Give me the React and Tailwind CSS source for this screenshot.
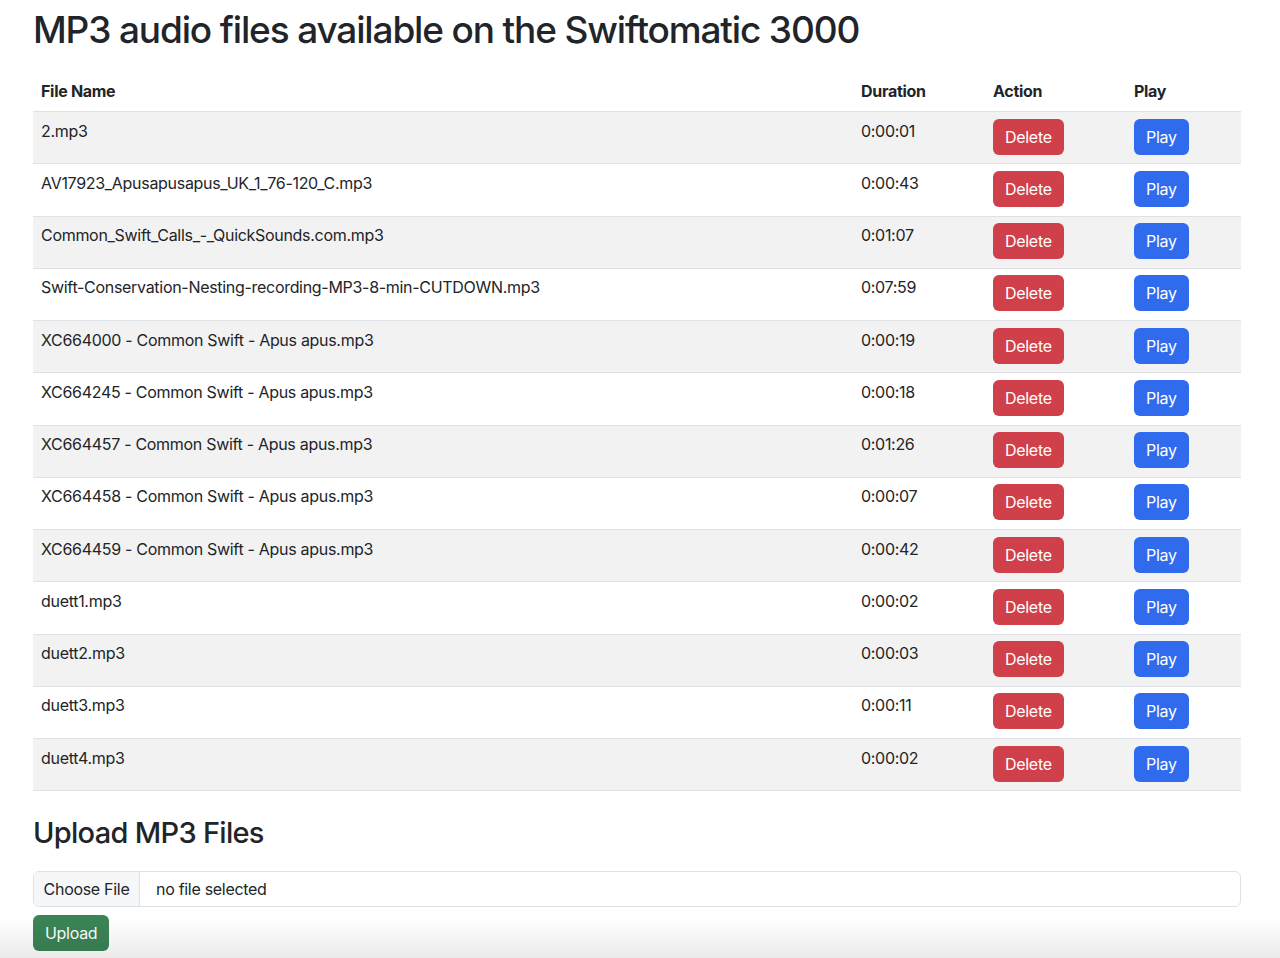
import React from 'react';

const files = [
  { name: '2.mp3', duration: '0:00:01' },
  { name: 'AV17923_Apusapusapus_UK_1_76-120_C.mp3', duration: '0:00:43' },
  { name: 'Common_Swift_Calls_-_QuickSounds.com.mp3', duration: '0:01:07' },
  { name: 'Swift-Conservation-Nesting-recording-MP3-8-min-CUTDOWN.mp3', duration: '0:07:59' },
  { name: 'XC664000 - Common Swift - Apus apus.mp3', duration: '0:00:19' },
  { name: 'XC664245 - Common Swift - Apus apus.mp3', duration: '0:00:18' },
  { name: 'XC664457 - Common Swift - Apus apus.mp3', duration: '0:01:26' },
  { name: 'XC664458 - Common Swift - Apus apus.mp3', duration: '0:00:07' },
  { name: 'XC664459 - Common Swift - Apus apus.mp3', duration: '0:00:42' },
  { name: 'duett1.mp3', duration: '0:00:02' },
  { name: 'duett2.mp3', duration: '0:00:03' },
  { name: 'duett3.mp3', duration: '0:00:11' },
  { name: 'duett4.mp3', duration: '0:00:02' },
];

const App = () => {
  return (
    <div className="min-h-[958px] bg-white text-[#212529] font-['Inter','Liberation_Sans',sans-serif] text-[16px] leading-6 tracking-[-0.3px]">
      <div className="pl-[33px] pr-[39px]">
        <h1 className="pt-[6px] text-[37px] leading-[48px] font-medium tracking-[-1.15px] mb-[17px]">
          MP3 audio files available on the Swiftomatic 3000
        </h1>

        <table className="w-full border-collapse text-left">
          <colgroup>
            <col className="w-[820px]" />
            <col className="w-[132px]" />
            <col className="w-[141px]" />
            <col />
          </colgroup>
          <thead>
            <tr className="border-b border-[#dee2e6]">
              <th className="px-2 py-2 font-bold">File Name</th>
              <th className="px-2 py-2 font-bold">Duration</th>
              <th className="px-2 py-2 font-bold">Action</th>
              <th className="px-2 py-2 font-bold">Play</th>
            </tr>
          </thead>
          <tbody>
            {files.map((f, idx) => (
              <tr key={f.name} className={`border-b border-[#dee2e6] ${idx % 2 === 0 ? 'bg-[#f2f2f2]' : 'bg-white'}`}>
                <td className="px-2 pt-[6.5px] pb-[8.75px] align-top">{f.name}</td>
                <td className="px-2 pt-[6.5px] pb-[8.75px] align-top">{f.duration}</td>
                <td className="px-2 pt-[6.5px] pb-[8.75px] align-top">
                  <button className="h-9 px-3 rounded-[6px] bg-[#cf404a] text-white">Delete</button>
                </td>
                <td className="px-2 pt-[6.5px] pb-[8.75px] align-top">
                  <button className="h-9 px-3 rounded-[6px] bg-[#2f6bec] text-white">Play</button>
                </td>
              </tr>
            ))}
          </tbody>
        </table>

        <h2 className="mt-[23px] text-[29px] leading-[38px] font-medium tracking-[-0.7px] mb-[19px]">Upload MP3 Files</h2>

        <div className="flex h-9 border border-[#dee2e6] rounded-[6px] overflow-hidden">
          <div className="w-[106px] flex items-center justify-center bg-[#f6f7f9] border-r border-[#dee2e6]">Choose File</div>
          <div className="flex items-center pl-4">no file selected</div>
        </div>

        <button className="mt-2 h-9 px-3 rounded-[6px] bg-[#3b8456] text-white">Upload</button>
      </div>

      <div className="fixed inset-x-0 bottom-0 h-[40px] bg-gradient-to-b from-transparent to-black/[0.08] pointer-events-none" />
    </div>
  );
};

export default App;
